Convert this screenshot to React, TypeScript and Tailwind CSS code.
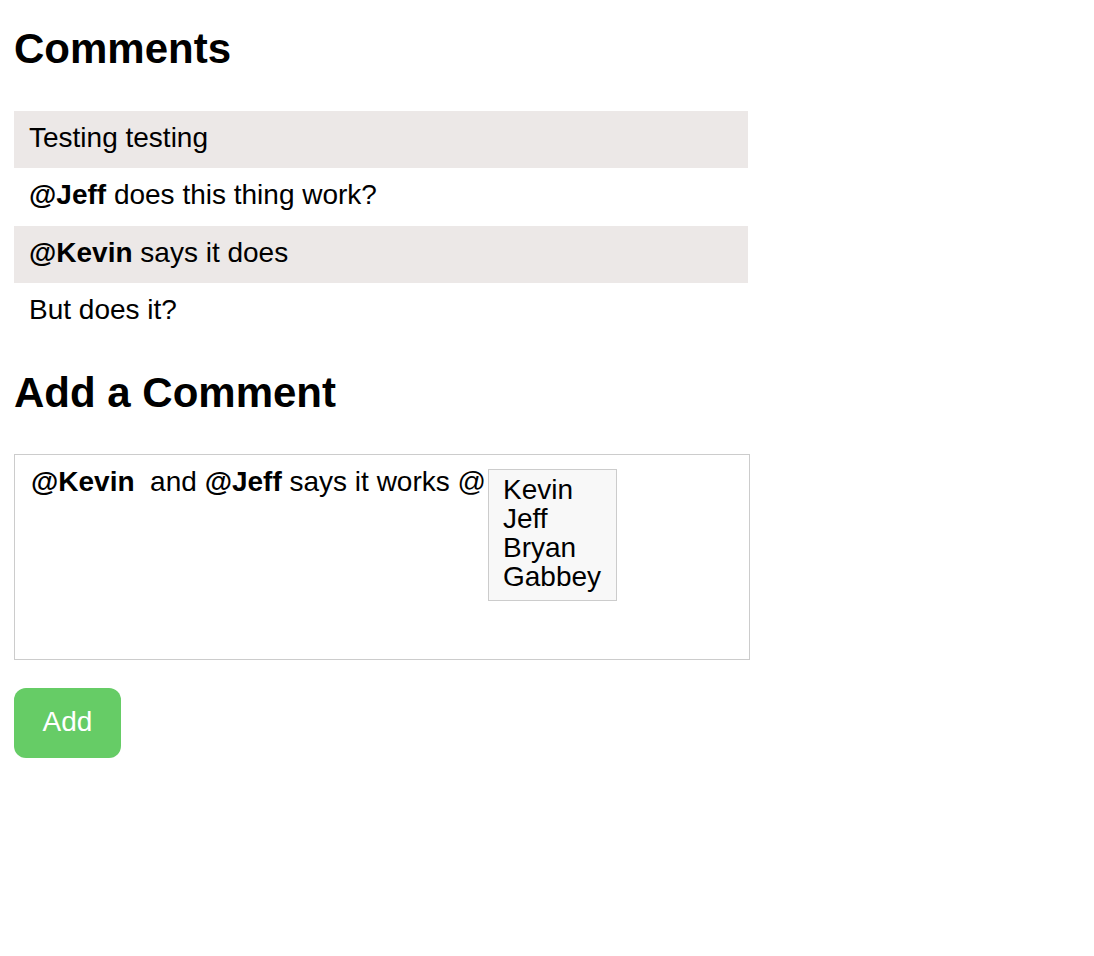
import React from "react";

type Comment = {
  mention?: string;
  text: string;
};

const comments: Comment[] = [
  { text: "Testing testing" },
  { mention: "Jeff", text: " does this thing work?" },
  { mention: "Kevin", text: " says it does" },
  { text: "But does it?" },
];

const people = ["Kevin", "Jeff", "Bryan", "Gabbey"];

const App = () => {
  return (
    <div className="min-h-[956px] bg-white pl-[14px] pt-[25px] text-black font-['Liberation_Sans',Arial,sans-serif]">
      <h1 className="h-[48px] text-[42px] leading-[48px] font-bold">Comments</h1>

      <div className="mt-[38px] w-[734px] flex flex-col">
        {comments.map((c, i) => (
          <div
            key={i}
            className={
              i % 2 === 0
                ? "h-[57.25px] pl-[15px] pt-[11px] text-[28px] leading-[32px] bg-[#ece8e7]"
                : "h-[57.25px] pl-[15px] pt-[11px] text-[28px] leading-[32px] bg-white"
            }
          >
            {c.mention && <b className="font-bold">@{c.mention}</b>}
            {c.text}
          </div>
        ))}
      </div>

      <h2 className="mt-[29px] h-[48px] text-[42px] leading-[48px] font-bold">
        Add a Comment
      </h2>

      <div className="relative mt-[37px] h-[206px] w-[736px] border border-[#cccccc] pl-[16px] pt-[11px] text-[28px] leading-[32px]">
        <b className="font-bold">@Kevin</b>
        {"\u00a0 and "}
        <b className="font-bold">@Jeff</b>
        {" says it works @"}
        <ul className="absolute left-[473px] top-[14px] border border-[#cccccc] bg-[#f8f8f8] pl-[14px] pr-[15px] pt-[5px] pb-[9px] text-[28px] leading-[29px]">
          {people.map((p) => (
            <li key={p}>{p}</li>
          ))}
        </ul>
      </div>

      <button className="mt-[28px] flex h-[70px] w-[107px] items-center justify-center rounded-[12px] bg-[#66cc66] pb-[3px] text-[28px] leading-[32px] text-white">
        Add
      </button>
    </div>
  );
};

export default App;
